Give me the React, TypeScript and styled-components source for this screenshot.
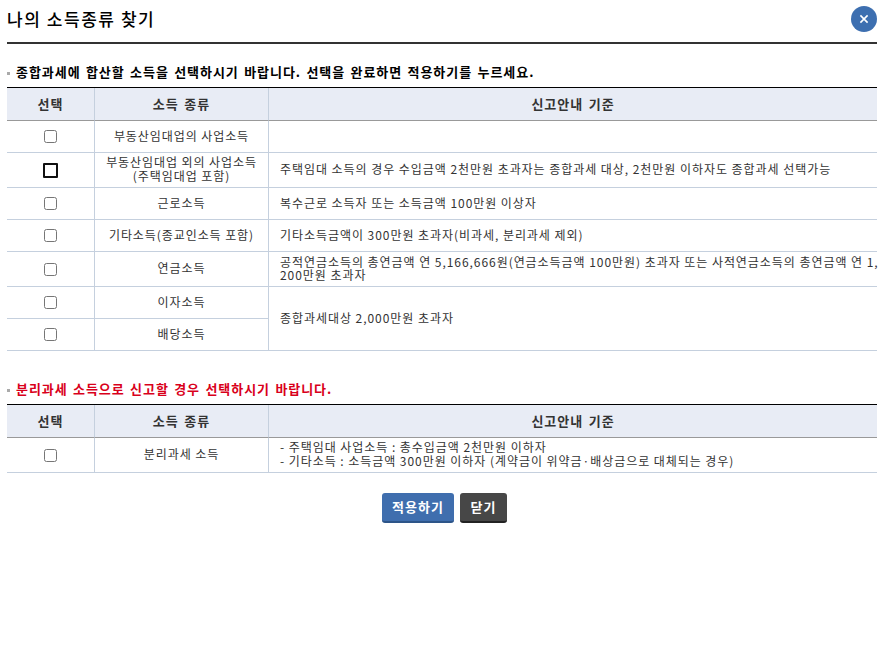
import React from 'react'
import styled, {createGlobalStyle} from 'styled-components'

const FONT = `"Noto Sans CJK KR", "Liberation Sans", sans-serif`

// types
type Row = {
    label: string[]
    desc?: string[]
    descSpan?: number
    noDesc?: boolean
    tight?: boolean
    focused?: boolean
    height: number
}

const incomeRows: Row[] = [
    {label: ['부동산임대업의 사업소득'], desc: [], height: 32},
    {
        label: ['부동산임대업 외의 사업소득', '(주택임대업 포함)'],
        desc: ['주택임대 소득의 경우 수입금액 2천만원 초과자는 종합과세 대상, 2천만원 이하자도 종합과세 선택가능'],
        focused: true,
        height: 35,
    },
    {label: ['근로소득'], desc: ['복수근로 소득자 또는 소득금액 100만원 이상자'], height: 32},
    {label: ['기타소득(종교인소득 포함)'], desc: ['기타소득금액이 300만원 초과자(비과세, 분리과세 제외)'], height: 32},
    {
        label: ['연금소득'],
        desc: ['공적연금소득의 총연금액 연 5,166,666원(연금소득금액 100만원) 초과자 또는 사적연금소득의 총연금액 연 1,', '200만원 초과자'],
        tight: true,
        height: 35,
    },
    {label: ['이자소득'], desc: ['종합과세대상 2,000만원 초과자'], descSpan: 2, height: 32},
    {label: ['배당소득'], noDesc: true, height: 32},
]

const separateRows: Row[] = [
    {
        label: ['분리과세 소득'],
        desc: ['- 주택임대 사업소득 : 총수입금액 2천만원 이하자', '- 기타소득 : 소득금액 300만원 이하자 (계약금이 위약금·배상금으로 대체되는 경우)'],
        height: 35,
    },
]

const IncomeTable = ({rows}: { rows: Row[] }) => (
    <Table>
        <colgroup>
            <col width={88}/>
            <col width={174}/>
            <col/>
        </colgroup>
        <thead>
        <tr>
            <HeadCell>선택</HeadCell>
            <HeadCell>소득 종류</HeadCell>
            <HeadCell>신고안내 기준</HeadCell>
        </tr>
        </thead>
        <tbody>
        {rows.map((row, index) =>
            <BodyRow key={index} $height={row.height}>
                <CheckCell><Check type="checkbox" $focused={row.focused}/></CheckCell>
                <LabelCell>
                    {row.label.map((line, i) => <Line key={i}>{line}</Line>)}
                </LabelCell>
                {!row.noDesc &&
                    <DescCell rowSpan={row.descSpan} $tight={row.tight}>
                        {row.desc?.map((line, i) => <Line key={i}>{line}</Line>)}
                    </DescCell>
                }
            </BodyRow>
        )}
        </tbody>
    </Table>
)

export default function App() {
    return (
        <Popup>
            <GlobalStyle/>
            <Header>
                <Title>나의 소득종류 찾기</Title>
                <CloseButton aria-label="닫기">
                    <svg width="10" height="10" viewBox="0 0 10 10">
                        <path d="M1.4 1.4 L8.6 8.6 M8.6 1.4 L1.4 8.6" stroke="#fff" strokeWidth="1.6" fill="none"/>
                    </svg>
                </CloseButton>
            </Header>

            <Notice>종합과세에 합산할 소득을 선택하시기 바랍니다. 선택을 완료하면 적용하기를 누르세요.</Notice>
            <IncomeTable rows={incomeRows}/>

            <Notice $red $spaced>분리과세 소득으로 신고할 경우 선택하시기 바랍니다.</Notice>
            <IncomeTable rows={separateRows}/>

            <Buttons>
                <ActionButton>적용하기</ActionButton>
                <ActionButton $dark>닫기</ActionButton>
            </Buttons>
        </Popup>
    )
}

const GlobalStyle = createGlobalStyle`
  html, body {
    margin: 0;
    padding: 0;
    background: #fff;
  }
`

const Popup = styled.div`
  width: 884px;
  height: 646px;
  box-sizing: border-box;
  padding: 0 7px;
  font-family: ${FONT};
  font-size: 12px;
  color: #333;
  overflow: hidden;
`

const Header = styled.div`
  display: flex;
  justify-content: space-between;
  align-items: flex-start;
  height: 42px;
  border-bottom: 2px solid #333;
`

const Title = styled.h1`
  margin: 7px 0 0;
  font-size: 17px;
  line-height: 24px;
  font-weight: 500;
  letter-spacing: 1.55px;
  color: #000;
`

const CloseButton = styled.button`
  display: flex;
  align-items: center;
  justify-content: center;
  width: 26px;
  height: 26px;
  margin: 6px 0 0 0;
  padding: 0;
  border: 0;
  border-radius: 50%;
  background: #3d6fb0;
`

const Notice = styled.p<{ $red?: boolean; $spaced?: boolean }>`
  position: relative;
  margin: ${p => p.$spaced ? '29px' : '19px'} 0 0;
  height: 24px;
  padding-left: 9px;
  font-size: 13px;
  line-height: 18px;
  font-weight: 700;
  letter-spacing: 0.95px;
  word-spacing: 1.5px;
  color: ${p => p.$red ? '#d9001b' : '#000'};

  &::before {
    content: '';
    position: absolute;
    left: 0;
    top: 9px;
    width: 3px;
    height: 3px;
    background: #aaa;
  }
`

const Table = styled.table`
  width: 870px;
  border-collapse: separate;
  border-spacing: 0;
  table-layout: fixed;
  border-top: 1px solid #000;
`

const HeadCell = styled.th`
  height: 33px;
  padding: 0 0 2px;
  box-sizing: border-box;
  background: #e8ecf5;
  border-bottom: 1px solid #999;
  border-right: 1px solid #c5d0de;
  font-size: 13px;
  font-weight: 700;
  letter-spacing: 1px;
  word-spacing: 1.5px;
  color: #333;
  text-align: center;

  &:last-child {
    border-right: 0;
  }
`

const BodyRow = styled.tr<{ $height: number }>`
  height: ${p => p.$height}px;
`

const CheckCell = styled.td`
  padding: 0;
  text-align: center;
  border-bottom: 1px solid #c5d0de;
  border-right: 1px solid #c5d0de;
`

const LabelCell = styled(CheckCell)`
  padding-bottom: 2px;
  font-size: 12px;
  line-height: 14px;
  letter-spacing: 0.92px;
`

const DescCell = styled.td<{ $tight?: boolean }>`
  padding: 0 0 2px 11px;
  text-align: left;
  font-size: 12px;
  line-height: ${p => p.$tight ? 13 : 14}px;
  letter-spacing: 0.95px;
  border-bottom: 1px solid #c5d0de;
`

const Line = styled.div`
  white-space: nowrap;
`

const Check = styled.input<{ $focused?: boolean }>`
  appearance: none;
  display: block;
  box-sizing: border-box;
  margin: 0 auto;
  width: ${p => p.$focused ? 15 : 13}px;
  height: ${p => p.$focused ? 15 : 13}px;
  background: #fff;
  border: ${p => p.$focused ? '2px solid #101010' : '1px solid #767676'};
  border-radius: ${p => p.$focused ? 1 : 2.5}px;
`

const Buttons = styled.div`
  display: flex;
  justify-content: center;
  gap: 6px;
  margin: 20px 0 0 5px;
`

const ActionButton = styled.button<{ $dark?: boolean }>`
  height: 30px;
  min-width: ${p => p.$dark ? 47 : 72}px;
  padding: 0 10px 2px;
  border: 0;
  border-radius: 3px;
  border-bottom: 2px solid ${p => p.$dark ? '#222' : '#2d5589'};
  background: ${p => p.$dark ? '#474747' : '#3f6eae'};
  font-family: ${FONT};
  font-size: 13px;
  font-weight: 700;
  letter-spacing: 1px;
  color: #fff;
`
